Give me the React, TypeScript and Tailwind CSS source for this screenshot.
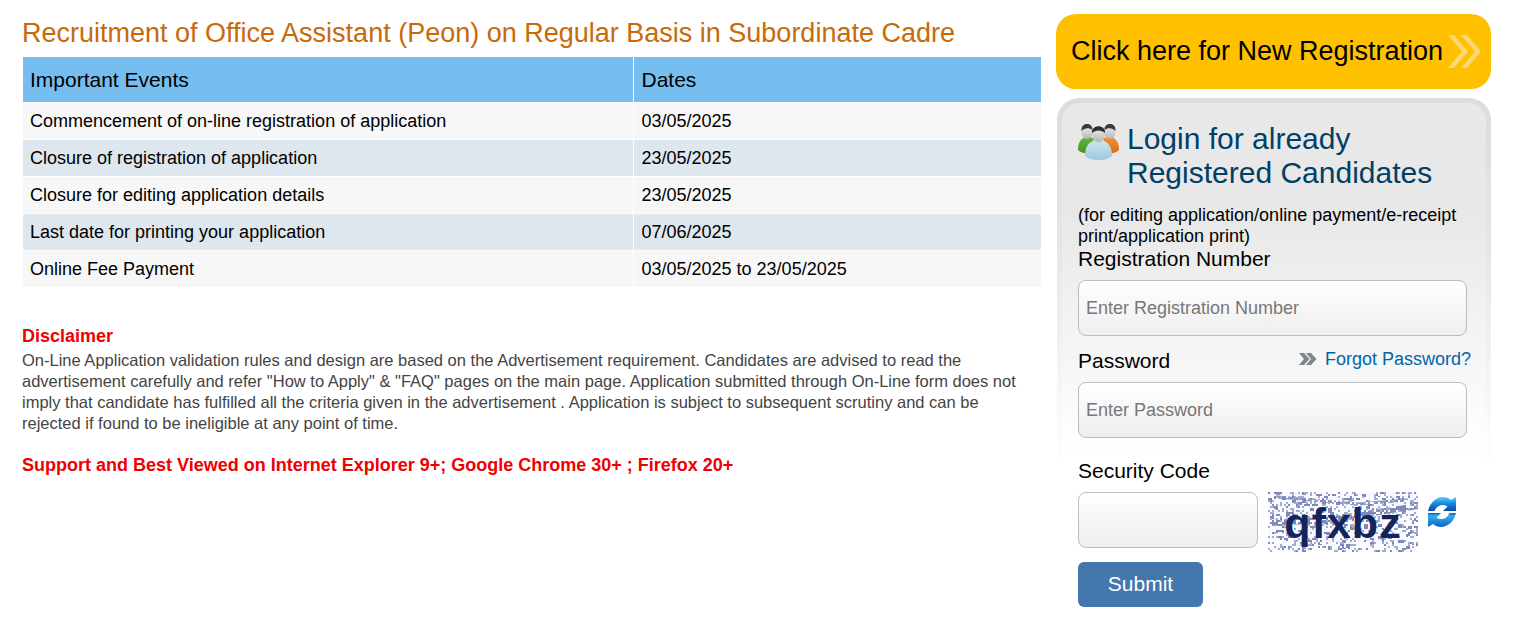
const FONT = "font-['Liberation_Sans',Arial,sans-serif]";

const rows = [
  ["Commencement of on-line registration of application", "03/05/2025"],
  ["Closure of registration of application", "23/05/2025"],
  ["Closure for editing application details", "23/05/2025"],
  ["Last date for printing your application", "07/06/2025"],
  ["Online Fee Payment", "03/05/2025 to 23/05/2025"],
];

function Noise() {
  let seed = 12345;
  const rnd = () => {
    seed = (seed * 16807) % 2147483647;
    return seed / 2147483647;
  };
  const dots: { x: number; y: number; w: number; h: number; c: string }[] = [];
  for (let y = 0; y < 60; y += 2) {
    for (let x = 0; x < 150; x += 2) {
      const r = rnd();
      if (r < 0.27) dots.push({ x, y, w: r < 0.07 ? 4 : 2, h: r < 0.04 ? 3 : 2, c: r < 0.1 ? "#7f89b8" : "#a4accf" });
      else if (r > 0.8) dots.push({ x, y, w: 2, h: 2, c: "#ffffff" });
    }
  }
  return (
    <svg className="absolute inset-0" width="150" height="60" viewBox="0 0 150 60">
      <rect width="150" height="60" fill="#f8f9fd" />
      <path d="M0 31 L60 28 L150 14" stroke="#7f89b6" strokeWidth="6" fill="none" />
      <path d="M10 5 L90 12 L140 8" stroke="#8c95bd" strokeWidth="3" fill="none" />
      {dots.map((d, i) => (
        <rect key={i} x={d.x} y={d.y} width={d.w} height={d.h} fill={d.c} />
      ))}
    </svg>
  );
}

function ChevronsBig() {
  return (
    <svg width="34" height="33" viewBox="0 0 34 33" className="shrink-0">
      <path d="M0 0 H6 L20 16.500 L6 33 H0 L14 16.500 Z" fill="#ffd874" />
      <path d="M13 0 H19 L33 16.500 L19 33 H13 L27 16.500 Z" fill="#ffd874" />
    </svg>
  );
}

function ChevronsSmall() {
  return (
    <svg width="18" height="12" viewBox="0 0 18 12" className="shrink-0">
      <path d="M0 0 H5 L10.500 6 L5 12 H0 L5 6 Z" fill="#7f858c" />
      <path d="M7 0 H12 L17.500 6 L12 12 H7 L12 6 Z" fill="#7f858c" />
    </svg>
  );
}

function UsersIcon() {
  return (
    <svg width="42" height="38" viewBox="0 0 42 38" className="shrink-0">
      <defs>
        <linearGradient id="gr" x1="0" y1="0" x2="0" y2="1">
          <stop offset="0" stopColor="#66b83c" />
          <stop offset="1" stopColor="#3f9422" />
        </linearGradient>
        <linearGradient id="or" x1="0" y1="0" x2="0" y2="1">
          <stop offset="0" stopColor="#f59232" />
          <stop offset="1" stopColor="#dd6a10" />
        </linearGradient>
        <linearGradient id="bl" x1="0" y1="0" x2="0" y2="1">
          <stop offset="0" stopColor="#cfe6f0" />
          <stop offset="1" stopColor="#9cc8dc" />
        </linearGradient>
        <linearGradient id="hd" x1="0" y1="0" x2="0" y2="1">
          <stop offset="0" stopColor="#f4f4f4" />
          <stop offset="1" stopColor="#b4b4b4" />
        </linearGradient>
      </defs>
      <path d="M0 27 C0 18 4 14 10 14 L16 15 L13 30 C8 31 3 30 0 27 Z" fill="url(#gr)" />
      <path d="M41 27 C41 18 37 14 31 14 L25 15 L28 30 C33 31 38 30 41 27 Z" fill="url(#or)" />
      <ellipse cx="9" cy="9" rx="5.500" ry="7" fill="url(#hd)" />
      <path d="M3.500 8 C2.500 -1 15 -1 14.500 7 C11 4.500 7 4.500 3.500 8 Z" fill="#3b3b3b" />
      <ellipse cx="32" cy="9" rx="5.500" ry="7" fill="url(#hd)" />
      <path d="M26.500 7 C26 -1 38.500 -1 37.500 8 C34 4.500 30 4.500 26.500 7 Z" fill="#3b3b3b" />
      <path d="M7 33 C7 21 13 17 20.500 17 C28 17 34 21 34 33 C29 38.500 12 38.500 7 33 Z" fill="url(#bl)" />
      <ellipse cx="20.500" cy="11" rx="6.500" ry="8.500" fill="url(#hd)" />
      <path d="M14 10 C13 1 28 1 27 10 C23.500 6.500 17.500 6.500 14 10 Z" fill="#2e2e2e" />
    </svg>
  );
}

function RefreshIcon() {
  return (
    <svg width="28" height="30" viewBox="0 0 28 30" className="shrink-0">
      <defs>
        <linearGradient id="rf" x1="0" y1="0" x2="0" y2="1">
          <stop offset="0" stopColor="#5cc8f7" />
          <stop offset="0.5" stopColor="#1385e0" />
          <stop offset="1" stopColor="#0a4a9e" />
        </linearGradient>
        <linearGradient id="rf2" x1="0" y1="0" x2="0" y2="1">
          <stop offset="0" stopColor="#0a5bb5" />
          <stop offset="0.2" stopColor="#35aef0" />
          <stop offset="1" stopColor="#0d63c4" />
        </linearGradient>
      </defs>
      <path d="M0 14 C2 5 9 0 15 0 C18 0 21 1 23 3 L28 0 V14 H15 L19.500 9.500 C15 6.500 9 8 6.500 14 Z" fill="url(#rf)" />
      <path d="M28 16 C26 25 19 30 13 30 C10 30 7 29 5 27 L0 30 V16 H13 L8.500 20.500 C13 23.500 19 22 21.500 16 Z" fill="url(#rf2)" />
    </svg>
  );
}

const inputCls =
  "block h-14 rounded-lg border border-[#bcbcbc] bg-[linear-gradient(#ffffff,#eeeeee)] pl-[7px] text-lg text-black outline-none placeholder:text-[#777777]";

export default function App() {
  return (
    <div className={`${FONT} flex h-[633px] w-[1519px] overflow-hidden bg-white text-black`}>
      <main className="ml-[22px] mt-[16px] w-[1019px] shrink-0">
        <h1 className="text-[27px] leading-[34px] font-normal text-[#c8690a]">
          Recruitment of Office Assistant (Peon) on Regular Basis in Subordinate Cadre
        </h1>
        <table className="mt-[7px] w-full table-fixed border-separate border-spacing-0">
          <thead>
            <tr className="bg-[#76bdf0]">
              <th className="h-[46px] w-[612px] border-r border-b border-l border-white pl-[7px] text-left text-[21px] font-normal">
                Important Events
              </th>
              <th className="border-b border-white pl-[7.500px] text-left text-[21px] font-normal">Dates</th>
            </tr>
          </thead>
          <tbody>
            {rows.map(([a, b], i) => (
              <tr key={a} className={i % 2 ? "bg-[#dee6ee]" : "bg-[#f7f7f7]"}>
                <td className="h-[37px] border-r border-b border-l border-white pl-[7px] text-lg">{a}</td>
                <td className="border-b border-white pl-[7.500px] text-lg">{b}</td>
              </tr>
            ))}
          </tbody>
        </table>
        <h2 className="mt-[38px] text-lg leading-5 font-bold text-[#f00000]">Disclaimer</h2>
        <p className="mt-[4px] w-[1010px] text-[16.500px] leading-[21px] text-[#444444]">
          On-Line Application validation rules and design are based on the Advertisement requirement. Candidates are
          advised to read the advertisement carefully and refer "How to Apply" &amp; "FAQ" pages on the main page.
          Application submitted through On-Line form does not imply that candidate has fulfilled all the criteria given
          in the advertisement . Application is subject to subsequent scrutiny and can be rejected if found to be
          ineligible at any point of time.
        </p>
        <p className="mt-[21px] text-lg leading-5 font-bold text-[#f00000]">
          Support and Best Viewed on Internet Explorer 9+; Google Chrome 30+ ; Firefox 20+
        </p>
      </main>

      <aside className="ml-[15px] mt-[14px] w-[435px] shrink-0">
        <a className="flex h-[75px] items-center justify-between rounded-[20px] bg-[#ffc000] pr-[9px] pl-[15px] text-[27px]">
          Click here for New Registration
          <ChevronsBig />
        </a>

        <section className="mt-[9px] ml-[1px] h-[520px] rounded-t-[22px] bg-[linear-gradient(#dcdcdc_0,#e6e6e6_150px,#ffffff_370px)] px-[5px] pt-[5px]">
          <div className="h-full rounded-t-[18px] bg-[linear-gradient(#e8e8e8_0,#e8e8e8_110px,#ffffff_350px)] px-4 pt-[19px]">
            <div className="flex">
              <div className="mt-[1px] w-[49px]">
                <UsersIcon />
              </div>
              <h2 className="text-[30px] leading-[34px] font-normal text-[#004066]">
                Login for already
                <br />
                Registered Candidates
              </h2>
            </div>
            <p className="mt-[15px] text-lg leading-[21px]">
              (for editing application/online payment/e-receipt print/application print)
            </p>
            <label className="block text-[21px] leading-[23px]">Registration Number</label>
            <input className={`${inputCls} mt-[10px] w-[389px]`} placeholder="Enter Registration Number" />
            <div className="mt-[13px] flex h-[23px] w-[393px] items-center justify-between">
              <label className="text-[21px] leading-[23px]">Password</label>
              <a className="-mt-[4px] flex items-center gap-[8px] text-lg leading-5 text-[#0066a8]">
                <ChevronsSmall />
                Forgot Password?
              </a>
            </div>
            <input className={`${inputCls} mt-[10px] w-[389px]`} placeholder="Enter Password" />
            <label className="mt-[21px] block text-[21px] leading-[23px]">Security Code</label>
            <div className="mt-[10px] flex items-start">
              <input className={`${inputCls} w-[180px] shrink-0`} />
              <div className="relative ml-[10px] h-[60px] w-[150px] shrink-0 overflow-hidden">
                <Noise />
                <span className="absolute inset-x-0 top-[9px] text-center text-[43px] leading-[44px] font-bold tracking-[1px] text-[#14245c]">
                  qfxbz
                </span>
              </div>
              <div className="mt-[5px] ml-[10px] shrink-0">
                <RefreshIcon />
              </div>
            </div>
            <button className="mt-[10px] block h-[45px] w-[125px] rounded-md bg-[#4477ad] pb-[2px] text-[21px] text-white">
              Submit
            </button>
          </div>
        </section>
      </aside>
    </div>
  );
}
